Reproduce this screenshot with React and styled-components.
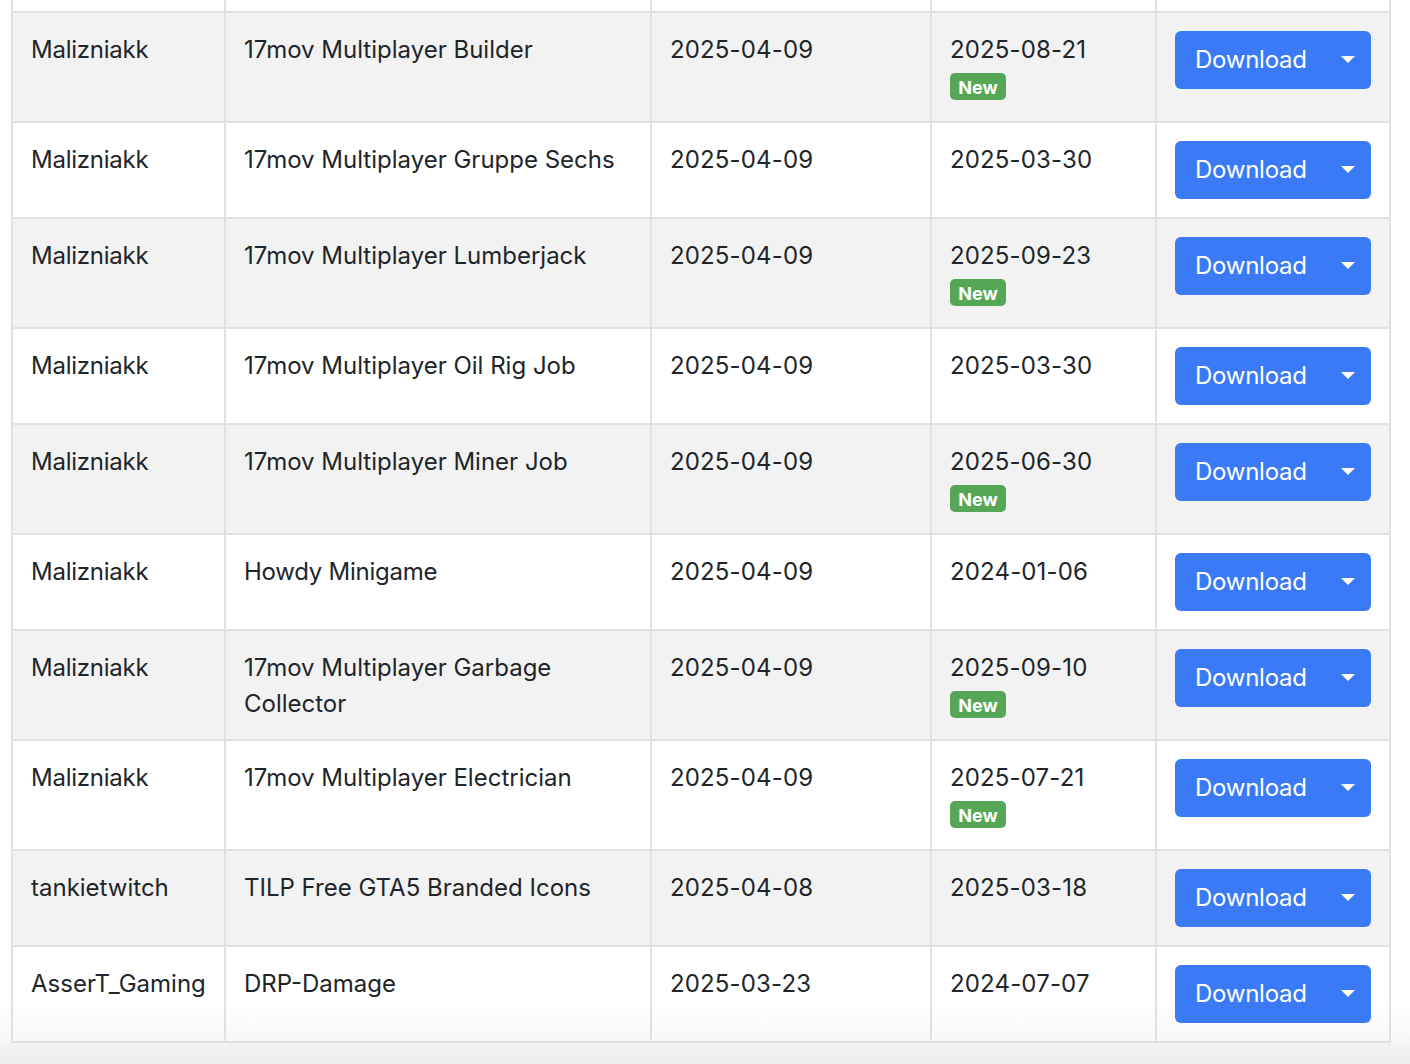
import React from "react";
import styled, { createGlobalStyle } from "styled-components";

const GlobalStyle = createGlobalStyle`
  html, body {
    margin: 0;
    padding: 0;
    background: #fff;
    overflow: hidden;
  }
  body {
    font-family: Inter, "Liberation Sans", sans-serif;
    font-size: 24px;
    line-height: 36px;
    color: #212529;
  }
`;

const Page = styled.div`
  height: 1064px;
  overflow: hidden;
  padding: 0 20px 0 11px;
  background: linear-gradient(
    to bottom,
    #fff 1000px,
    #f9f9f9 1035px,
    #f1f1f1 1050px,
    #ececec 1064px
  );
`;

const Table = styled.table`
  width: 1378px;
  table-layout: fixed;
  border-collapse: collapse;
`;

const ClippedRow = styled.tr`
  height: 12px;
  background: #fff;
`;

const ClippedCell = styled.td`
  padding: 0;
  border: 2px solid #dee2e6;
  border-top: 0;
`;

const Row = styled.tr`
  background: ${(p) => (p.$striped ? "#f2f2f2" : "transparent")};
`;

const Cell = styled.td`
  padding: 18px;
  border: 2px solid #dee2e6;
  vertical-align: top;
`;

const CellText = styled.div`
  padding-top: 1px;
  margin-bottom: -1px;
  letter-spacing: ${(p) => (p.$tight ? "-0.25px" : "normal")};
`;

const DateText = styled(CellText)`
  letter-spacing: 0.15px;
`;

const NewBadge = styled.span`
  display: block;
  width: 56px;
  height: 27px;
  margin: 6px 0 3px;
  border-radius: 5px;
  background: #55a757;
  color: #fff;
  font-size: 18px;
  font-weight: 700;
  line-height: 29px;
  text-align: center;
`;

const SplitButton = styled.div`
  display: flex;
  width: 196px;
  height: 58px;
  border-radius: 6px;
  overflow: hidden;
  background: #3a7af7;
  color: #fff;
`;

const DownloadLabel = styled.span`
  flex: 1;
  padding-left: 20px;
  line-height: 58px;
  letter-spacing: -0.25px;
`;

const Caret = styled.span`
  width: 0;
  height: 0;
  margin: 25px 16px 0 0;
  border-top: 7px solid #fff;
  border-left: 7px solid transparent;
  border-right: 7px solid transparent;
`;

const tightNames = ["Malizniakk", "Howdy Minigame"];

const resources = [
  ["Malizniakk", "17mov Multiplayer Builder", "2025-04-09", "2025-08-21", true],
  ["Malizniakk", "17mov Multiplayer Gruppe Sechs", "2025-04-09", "2025-03-30", false],
  ["Malizniakk", "17mov Multiplayer Lumberjack", "2025-04-09", "2025-09-23", true],
  ["Malizniakk", "17mov Multiplayer Oil Rig Job", "2025-04-09", "2025-03-30", false],
  ["Malizniakk", "17mov Multiplayer Miner Job", "2025-04-09", "2025-06-30", true],
  ["Malizniakk", "Howdy Minigame", "2025-04-09", "2024-01-06", false],
  ["Malizniakk", "17mov Multiplayer Garbage Collector", "2025-04-09", "2025-09-10", true],
  ["Malizniakk", "17mov Multiplayer Electrician", "2025-04-09", "2025-07-21", true],
  ["tankietwitch", "TILP Free GTA5 Branded Icons", "2025-04-08", "2025-03-18", false],
  ["AsserT_Gaming", "DRP-Damage", "2025-03-23", "2024-07-07", false],
];

const App = () => (
  <Page>
    <GlobalStyle />
    <Table>
      <colgroup>
        <col style={{ width: 213 }} />
        <col style={{ width: 426 }} />
        <col style={{ width: 280 }} />
        <col style={{ width: 225 }} />
        <col style={{ width: 234 }} />
      </colgroup>
      <tbody>
        <ClippedRow>
          {[0, 1, 2, 3, 4].map((i) => <ClippedCell key={i} />)}
        </ClippedRow>
        {resources.map(([author, name, added, updated, isNew], i) => (
          <Row key={name} $striped={i % 2 === 0}>
            <Cell><CellText $tight={tightNames.includes(author)}>{author}</CellText></Cell>
            <Cell><CellText $tight={tightNames.includes(name)}>{name}</CellText></Cell>
            <Cell><DateText>{added}</DateText></Cell>
            <Cell>
              <DateText>{updated}</DateText>
              {isNew && <NewBadge>New</NewBadge>}
            </Cell>
            <Cell>
              <SplitButton>
                <DownloadLabel>Download</DownloadLabel>
                <Caret />
              </SplitButton>
            </Cell>
          </Row>
        ))}
      </tbody>
    </Table>
  </Page>
);

export default App;
